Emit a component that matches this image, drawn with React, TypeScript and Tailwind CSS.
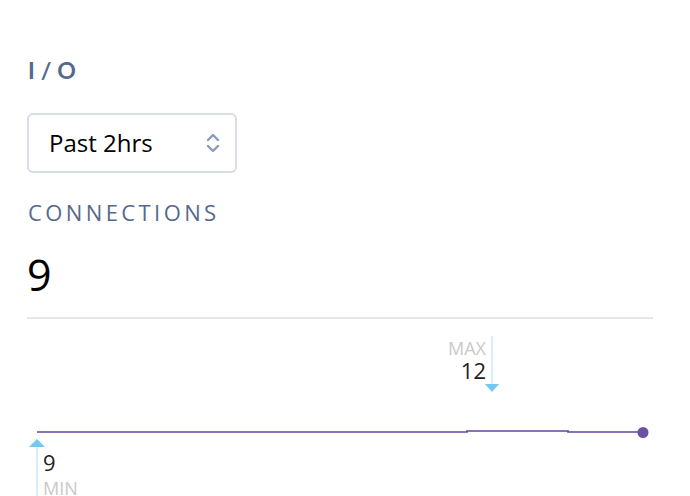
import React from "react";

export default function App() {
  return (
    <div className="w-[690px] h-[496px] bg-white overflow-hidden" style={{ fontFamily: "'Open Sans', Lato, sans-serif" }}>
      <div className="pl-[27px] pr-[37px] pt-[56px]">
        <div className="text-[23px] leading-[28px] font-bold tracking-[6px] text-[#54698d] pl-px" style={{ fontFamily: "Lato, sans-serif" }}>I/O</div>
        <div className="mt-[29px] w-[210px] h-[60px] border-2 border-[#d8dde6] rounded-[6px] flex items-center justify-between pl-[20px] pr-[15px]">
          <span className="text-[24px] text-black">Past 2hrs</span>
          <svg width="14" height="20" viewBox="0 0 14 20" fill="none" stroke="#8a9bb5" strokeWidth="2.4" strokeLinecap="round" strokeLinejoin="round">
            <path d="M2 7 L7 2 L12 7" />
            <path d="M2 13 L7 18 L12 13" />
          </svg>
        </div>
        <div className="mt-[27px] text-[22px] leading-[24px] tracking-[3.4px] text-[#54698d] pl-px">CONNECTIONS</div>
        <div className="mt-[27px] text-[43px] leading-[48px] text-black">9</div>
        <div className="mt-[18px] h-[2px] bg-[#e1e6ef] w-[626px]" />
      </div>
      <svg width="690" height="178" viewBox="0 0 690 178" className="block">
        <line x1="492" y1="17" x2="492" y2="66" stroke="#c8e8fa" strokeWidth="1.5" />
        <polygon points="485,65 499,65 492,73" fill="#75c7f0" />
        <text x="486" y="36" textAnchor="end" fontSize="18" fill="#c9c9c9" fontFamily="'Open Sans', sans-serif">MAX</text>
        <text x="486" y="60" textAnchor="end" fontSize="22" fill="#222" fontFamily="'Open Sans', sans-serif">12</text>
        <path d="M37 113 H467 V112 H568 V113 H643" fill="none" stroke="#61459c" strokeWidth="1.6" />
        <circle cx="643" cy="113.5" r="5.5" fill="#6a52a0" />
        <line x1="37" y1="128" x2="37" y2="178" stroke="#c8e8fa" strokeWidth="1.5" />
        <polygon points="29,128 45,128 37,120" fill="#75c7f0" />
        <text x="43" y="152" fontSize="22" fill="#222" fontFamily="'Open Sans', sans-serif">9</text>
        <text x="43" y="176" fontSize="18" fill="#c9c9c9" fontFamily="'Open Sans', sans-serif">MIN</text>
      </svg>
    </div>
  );
}
